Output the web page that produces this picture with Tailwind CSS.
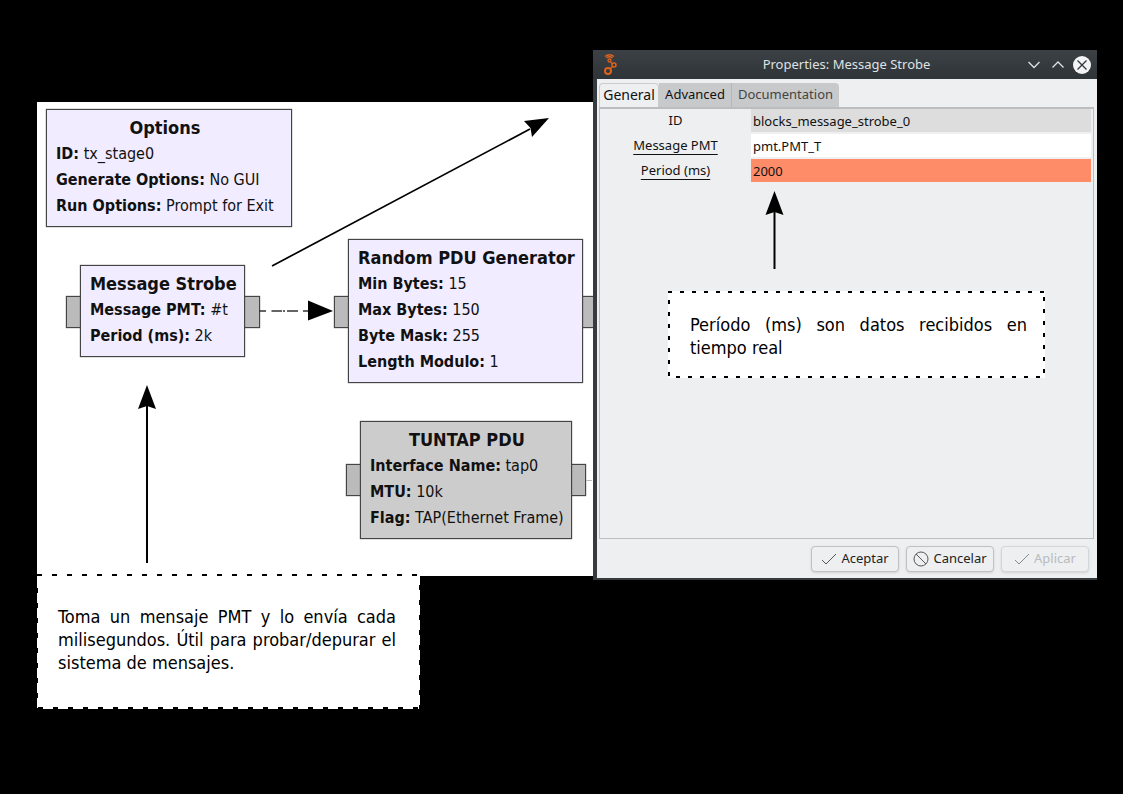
<!DOCTYPE html>
<html lang="es">
<head>
<meta charset="utf-8">
<title>Message Strobe</title>
<script src="https://cdn.jsdelivr.net/npm/@tailwindcss/browser@4"></script>
</head>
<body class="relative min-h-screen overflow-hidden bg-black text-[#111] font-['DejaVu_Sans',sans-serif]">

<!-- Flow graph canvas -->
<main class="absolute left-[37px] top-[102px] w-[600px] h-[474px] bg-white text-base leading-[26px] font-['DejaVu_Sans_Condensed','DejaVu_Sans',sans-serif]">
  <section class="absolute left-[9px] top-[7px] w-[246px] h-[118px] border border-[#444] shadow-[0_0_1px_#444] bg-[#f1ecff] px-[9px] py-1 whitespace-nowrap">
    <div class="w-fit">
      <h2 class="text-center text-lg leading-[27px] font-bold">Options</h2>
      <p><b>ID:</b> tx_stage0</p>
      <p><b>Generate Options:</b> No GUI</p>
      <p><b>Run Options:</b> Prompt for Exit</p>
    </div>
  </section>

  <i class="absolute left-[29px] top-[194px] w-4 h-8 border border-[#444] shadow-[0_0_1px_#444] bg-[#bbb]"></i>
  <i class="absolute left-[207px] top-[194px] w-4 h-8 border border-[#444] shadow-[0_0_1px_#444] bg-[#bbb]"></i>
  <section class="absolute left-[43px] top-[163px] w-[165px] h-[92px] border border-[#444] shadow-[0_0_1px_#444] bg-[#f1ecff] px-[9px] py-1 whitespace-nowrap">
    <div class="w-fit">
      <h2 class="text-center text-lg leading-[27px] font-bold">Message Strobe</h2>
      <p><b>Message PMT:</b> #t</p>
      <p><b>Period (ms):</b> 2k</p>
    </div>
  </section>

  <i class="absolute left-[297px] top-[194px] w-4 h-8 border border-[#444] shadow-[0_0_1px_#444] bg-[#bbb]"></i>
  <i class="absolute left-[544px] top-[194px] w-4 h-8 border border-[#444] shadow-[0_0_1px_#444] bg-[#bbb]"></i>
  <section class="absolute left-[311px] top-[137px] w-[235px] h-[144px] border border-[#444] shadow-[0_0_1px_#444] bg-[#f1ecff] px-[9px] py-1 whitespace-nowrap">
    <div class="w-fit">
      <h2 class="text-center text-lg leading-[27px] font-bold">Random PDU Generator</h2>
      <p><b>Min Bytes:</b> 15</p>
      <p><b>Max Bytes:</b> 150</p>
      <p><b>Byte Mask:</b> 255</p>
      <p><b>Length Modulo:</b> 1</p>
    </div>
  </section>

  <i class="absolute left-[309px] top-[362px] w-4 h-8 border border-[#444] shadow-[0_0_1px_#444] bg-[#bbb]"></i>
  <i class="absolute left-[533px] top-[362px] w-4 h-8 border border-[#444] shadow-[0_0_1px_#444] bg-[#bbb]"></i>
  <section class="absolute left-[323px] top-[319px] w-[212px] h-[118px] border border-[#444] shadow-[0_0_1px_#444] bg-[#ccc] px-[9px] py-1 whitespace-nowrap">
    <div class="w-fit">
      <h2 class="text-center text-lg leading-[27px] font-bold">TUNTAP PDU</h2>
      <p><b>Interface Name:</b> tap0</p>
      <p><b>MTU:</b> 10k</p>
      <p><b>Flag:</b> TAP(Ethernet Frame)</p>
    </div>
  </section>
</main>

<!-- Connections and pointers -->
<svg class="absolute left-0 top-0" width="620" height="600" viewBox="0 0 620 600" fill="none" stroke="#000" stroke-width="2">
  <path d="M259 311H266M271.5 311H282M283 311H285M287 311H298M303 311H308" stroke="#333" stroke-width="1.5"/>
  <path d="M308 300.5L333 311L308 320.5Z" fill="#000" stroke="none"/>
  <path d="M586 480.5H592" stroke="#bbb" stroke-width="1"/>
  <path d="M272 266L530 129" stroke-width="1.7"/>
  <path d="M549 118L524 121L530.5 128L532 137Z" fill="#000" stroke="none"/>
  <path d="M147 563V405"/>
  <path d="M147 385L138 409L147 406L156 409Z" fill="#000" stroke="none"/>
</svg>

<!-- Note on the Message Strobe block -->
<aside class="absolute left-[37px] top-[574px] w-[383px] h-[135px] bg-white pl-[21px] pr-6 py-[31px]">
  <svg class="absolute left-0 top-0" width="383" height="135" fill="none" stroke="#000" stroke-width="2">
    <path d="M0 1H383M0 14V135M383 11V135M1 134H383" stroke-dasharray="5 10"/>
  </svg>
  <p class="text-justify text-lg leading-[23px] text-black font-['DejaVu_Sans_Condensed','DejaVu_Sans',sans-serif]">Toma un mensaje PMT y lo envía cada milisegundos. Útil para probar/depurar el sistema de mensajes.</p>
</aside>

<!-- Properties dialog -->
<section class="absolute left-[593px] top-[50px] w-[504px] h-[530px] flex flex-col border-l-4 border-b-2 border-[#363b40] bg-[#eeeff1] font-['Noto_Sans',sans-serif]">
  <header class="-ml-1 h-[29px] shrink-0 flex items-center bg-linear-to-b from-[#3c4146] to-[#2f3439] text-[#dfe1e3]">
    <svg class="ml-2 shrink-0" width="20" height="24" viewBox="0 0 20 24" fill="none" stroke="#e0621b" stroke-width="2">
      <circle cx="7" cy="18" r="3"/><circle cx="13" cy="12" r="2" stroke-width="1.5"/><circle cx="8.5" cy="7.5" r="1.5" stroke-width="1.3"/>
      <path d="M9 16L11.5 13.5M9.5 9L11.5 10.5" stroke-width="1.3"/>
      <path d="M4 3.5Q8.5 0 13 3.5M5.5 5Q8.5 2.5 11.5 5" stroke-width="1.5"/>
    </svg>
    <h1 class="flex-1 pl-[50px] text-center text-[13px]">Properties: Message Strobe</h1>
    <button aria-label="Minimizar" class="w-6 h-6 flex items-center justify-center"><svg width="14" height="8" viewBox="0 0 14 8" fill="none" stroke="#dfe1e3" stroke-width="1.3"><path d="M1.5 1L7 6.5L12.5 1"/></svg></button>
    <button aria-label="Maximizar" class="w-6 h-6 flex items-center justify-center"><svg width="14" height="8" viewBox="0 0 14 8" fill="none" stroke="#dfe1e3" stroke-width="1.3"><path d="M1.5 6.5L7 1L12.5 6.5"/></svg></button>
    <button aria-label="Cerrar" class="mr-[3px] w-6 h-6 flex items-center justify-center"><svg width="18" height="18" viewBox="0 0 18 18"><circle cx="9" cy="9" r="9" fill="#f3f4f5"/><path d="M4.5 4.5L13.5 13.5M13.5 4.5L4.5 13.5" stroke="#31363b" stroke-width="1.3"/></svg></button>
  </header>
  <nav role="tablist" class="flex h-7 shrink-0 items-end pl-0.5 pt-1 text-[13px]">
    <button role="tab" aria-selected="true" class="h-6 w-[60px] rounded-t-sm border border-b-0 border-[#ccc] bg-[#eeeff1] pb-0.5 text-sm leading-5">General</button>
    <button role="tab" class="h-6 w-[73px] border-r border-[#b5b7b9] bg-[#c8c9cb]">Advanced</button>
    <button role="tab" class="h-6 w-[107px] rounded-tr-sm bg-[#c8c9cb] text-[#444]">Documentation</button>
  </nav>
  <form id="props" class="ml-0.5 mr-[3px] flex-1 border border-t-2 border-[#bbbdbf] pr-0.5">
    <div class="grid grid-cols-[151px_1fr] gap-y-0.5 text-[13px]">
      <label for="f-id" class="text-center leading-[23px]">ID</label>
      <input id="f-id" readonly value="blocks_message_strobe_0" class="h-[23px] min-w-0 bg-[#ddd] px-0.5">
      <label for="f-msg" class="text-center leading-[23px] underline underline-offset-4">Message PMT</label>
      <input id="f-msg" value="pmt.PMT_T" class="h-[23px] min-w-0 bg-white px-0.5">
      <label for="f-per" class="text-center leading-[23px] underline underline-offset-4">Period (ms)</label>
      <input id="f-per" value="2000" class="h-[23px] min-w-0 bg-[#ff8c69] px-0.5">
    </div>
  </form>
  <footer class="flex h-[39px] shrink-0 items-center justify-end gap-[7px] pr-2 text-[13px] text-[#222]">
    <button class="flex h-[26px] w-[88px] items-center justify-center gap-1 rounded-sm border border-[#bfc1c3] bg-[#eeeff1] shadow-sm"><svg width="16" height="16" viewBox="0 0 16 16" fill="none" stroke="#555"><path d="M1 9L5 13L15 3"/></svg>Aceptar</button>
    <button class="flex h-[26px] w-[88px] items-center justify-center gap-1 rounded-sm border border-[#bfc1c3] bg-[#eeeff1] shadow-sm"><svg width="16" height="16" viewBox="0 0 16 16" fill="none" stroke="#555"><circle cx="8" cy="8" r="7"/><path d="M3 3L13 13"/></svg>Cancelar</button>
    <button disabled class="flex h-[26px] w-[88px] items-center justify-center gap-1 rounded-sm border border-[#d5d7d9] bg-[#eeeff1] text-[#b9bbbd] shadow-sm"><svg width="16" height="16" viewBox="0 0 16 16" fill="none" stroke="#888"><path d="M1 9L5 13L15 3"/></svg>Aplicar</button>
  </footer>
</section>

<!-- Pointer and note on the Period field -->
<svg class="absolute left-[764px] top-[190px]" width="22" height="80" viewBox="0 0 22 80"><path d="M10.5 79V20" stroke="#000" stroke-width="2"/><path d="M10.5 1L1.5 25L10.5 22L19.5 25Z"/></svg>
<aside class="absolute left-[668px] top-[291px] w-[377px] h-[87px] bg-white pl-[22px] pr-[18px] py-[22px]">
  <svg class="absolute left-0 top-0" width="377" height="87" fill="none" stroke="#000" stroke-width="2">
    <path d="M0 1H377M1 9V87M376 6V87M8 86H377" stroke-dasharray="4 8"/>
  </svg>
  <p class="text-justify text-lg leading-[23px] text-black font-['DejaVu_Sans_Condensed','DejaVu_Sans',sans-serif]">Período (ms) son datos recibidos en tiempo real</p>
</aside>
</body>
</html>
